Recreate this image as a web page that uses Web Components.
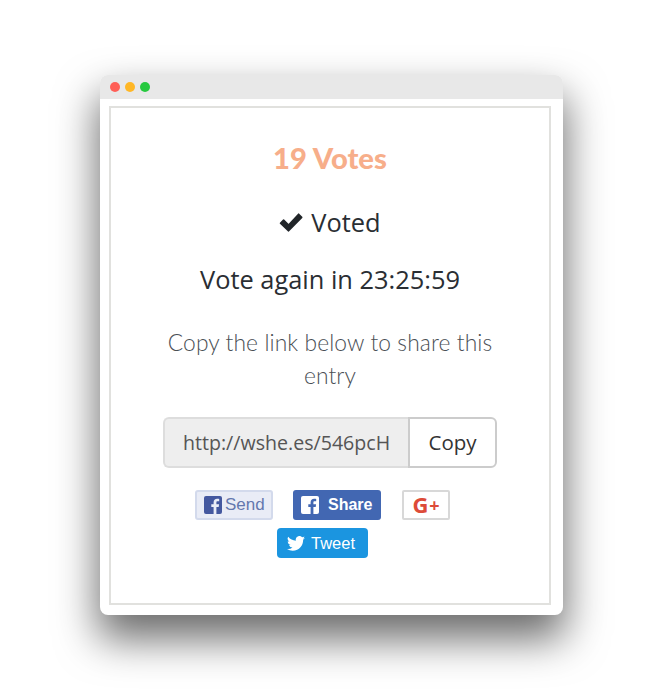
<!DOCTYPE html>
<html><head><meta charset="utf-8">
<style>
html,body{margin:0;background:#fff;}
body{width:663px;height:690px;overflow:hidden;padding:75px 0 0 100px;box-sizing:border-box;font-family:"Open Sans",sans-serif;}
</style></head><body>
<template id="t-window">
<style>
:host{display:block;width:463px;height:540px;background:#fff;border-radius:8px;box-shadow:0 22px 42px 2px rgba(0,0,0,.58);overflow:visible;}
.bar{height:24px;background:#e8e8e8;border-radius:8px 8px 0 0;display:flex;align-items:center;gap:5px;padding-left:10px;box-sizing:border-box;}
.bar i{width:10px;height:10px;border-radius:50%;display:block;}
.frame{margin:7px 12px 0 9px;height:499px;box-sizing:border-box;border:2px solid #e1e1de;}
</style>
<div class="bar"><i style="background:#ff5f57"></i><i style="background:#ffb726"></i><i style="background:#27c93f"></i></div>
<div class="frame"><slot></slot></div>
</template>
<template id="t-vote">
<style>
:host{display:block;text-align:center;color:#2a2e33;}
h2{margin:0;padding-top:31px;height:37px;font:900 29.200px/37px "Lato",sans-serif;color:#f7ae8a;box-sizing:content-box;}
.voted{margin-top:28px;height:36px;font-size:25.400px;line-height:36px;display:flex;justify-content:center;align-items:center;gap:8px;transform:none;}
.voted svg{display:block;}
.again{margin-top:21px;height:36px;font-size:25.400px;line-height:36px;}
.copy{margin:29px auto 0;width:340px;font:300 22.800px/33px "Lato",sans-serif;color:#4a4f55;letter-spacing:.1px;}
</style>
<h2>19 Votes</h2>
<div class="voted"><svg width="24" height="20" viewBox="0 0 24 20"><path d="M1.500 11.200 4.600 8l5 5L19.600 2.200l3.100 3.200L9.600 18.800z" fill="#212529" stroke="#212529" stroke-width="1.600" stroke-linejoin="round"/></svg><span>Voted</span></div>
<div class="again">Vote again in 23:25:59</div>
<div class="copy">Copy the link below to share this entry</div>
<slot></slot>
</template>
<template id="t-link">
<style>
:host{display:flex;width:334px;height:51px;margin:25px 0 0 52px;font-size:20.500px;}
.in{width:245px;box-sizing:border-box;background:#eee;border:2px solid #ddd;border-right:0;border-radius:6px 0 0 6px;padding:0 18px;line-height:47px;color:#555;white-space:nowrap;font-size:19.600px;}
.in span{display:block;overflow:hidden;}
.btn{flex:1;box-sizing:border-box;border:2px solid #ccc;border-radius:0 6px 6px 0;text-align:center;line-height:47px;color:#333;background:#fff;}
</style>
<div class="in"><span>http://wshe.es/546pcH6</span></div><div class="btn">Copy</div>
</template>
<template id="t-share">
<style>
:host{display:block;margin-top:22px;}
.row{display:flex;height:30px;}
.row+.row{margin-top:8px;}
.b{box-sizing:border-box;height:30px;border-radius:3px;display:flex;align-items:center;font-family:"Liberation Sans",sans-serif;}
.send{margin-left:84px;width:78px;background:#e9ecf6;border:2px solid #d3daec;color:#6478ae;font-size:17px;padding-left:7px;gap:3px;}
.share{margin-left:20px;width:88px;background:#4267b2;color:#fff;font-weight:bold;font-size:16px;padding-left:8px;gap:9px;}
.gp{margin-left:21px;width:48px;background:#fff;border:2px solid #d8d8d8;border-radius:2px;justify-content:center;color:#dd4b39;font-weight:bold;font-family:"Open Sans",sans-serif;font-size:22px;line-height:24px;}
.gp small{font-size:18px;position:relative;top:-1px;margin-left:1px;}
.tw{margin-left:166px;width:91px;background:#1b95e0;color:#fff;font-size:16.500px;padding-left:10px;gap:6px;border-radius:4px;padding-top:1px;}
svg{display:block;flex:none;}
</style>
<div class="row">
<div class="b send"><svg width="18" height="18" viewBox="0 0 18 18"><rect width="18" height="18" rx="2" fill="#44589f"/><path d="M12.400 18v-7h2.300l.4-2.700h-2.700V6.600c0-.8.2-1.300 1.300-1.300h1.500V2.900c-.3 0-1.100-.1-2.100-.1-2.100 0-3.500 1.300-3.500 3.600v1.900H7.300V11h2.300v7z" fill="#e9ecf6"/></svg><span>Send</span></div>
<div class="b share"><svg width="18" height="18" viewBox="0 0 18 18"><rect width="18" height="18" rx="2" fill="#fff"/><path d="M12.400 18v-7h2.300l.4-2.700h-2.700V6.600c0-.8.2-1.300 1.300-1.300h1.500V2.900c-.3 0-1.100-.1-2.100-.1-2.100 0-3.500 1.300-3.500 3.600v1.900H7.300V11h2.300v7z" fill="#4267b2"/></svg><span>Share</span></div>
<div class="b gp"><span>G<small>+</small></span></div>
</div>
<div class="row">
<div class="b tw"><svg width="18" height="15" viewBox="0 0 24 20"><path d="M24 2.400a9.800 9.800 0 0 1-2.800.8A4.900 4.900 0 0 0 23.300.5a9.800 9.800 0 0 1-3.100 1.200 4.900 4.900 0 0 0-8.400 4.500A14 14 0 0 1 1.700.9a4.900 4.900 0 0 0 1.500 6.600 4.900 4.900 0 0 1-2.200-.6v.1a4.900 4.900 0 0 0 3.900 4.800 4.900 4.900 0 0 1-2.200.1 4.900 4.900 0 0 0 4.600 3.400A9.900 9.900 0 0 1 0 17.300 14 14 0 0 0 7.500 19.500c9.100 0 14-7.500 14-14v-.6A10 10 0 0 0 24 2.400z" fill="#fff"/></svg><span>Tweet</span></div>
</div>
</template>
<app-window><vote-panel><link-box></link-box><share-buttons></share-buttons></vote-panel></app-window>
<script>
for (const [name,id] of [['app-window','t-window'],['vote-panel','t-vote'],['link-box','t-link'],['share-buttons','t-share']]) {
  customElements.define(name, class extends HTMLElement {
    constructor(){super();this.attachShadow({mode:'open'}).appendChild(document.getElementById(id).content.cloneNode(true));}
  });
}
</script>
</body></html>
